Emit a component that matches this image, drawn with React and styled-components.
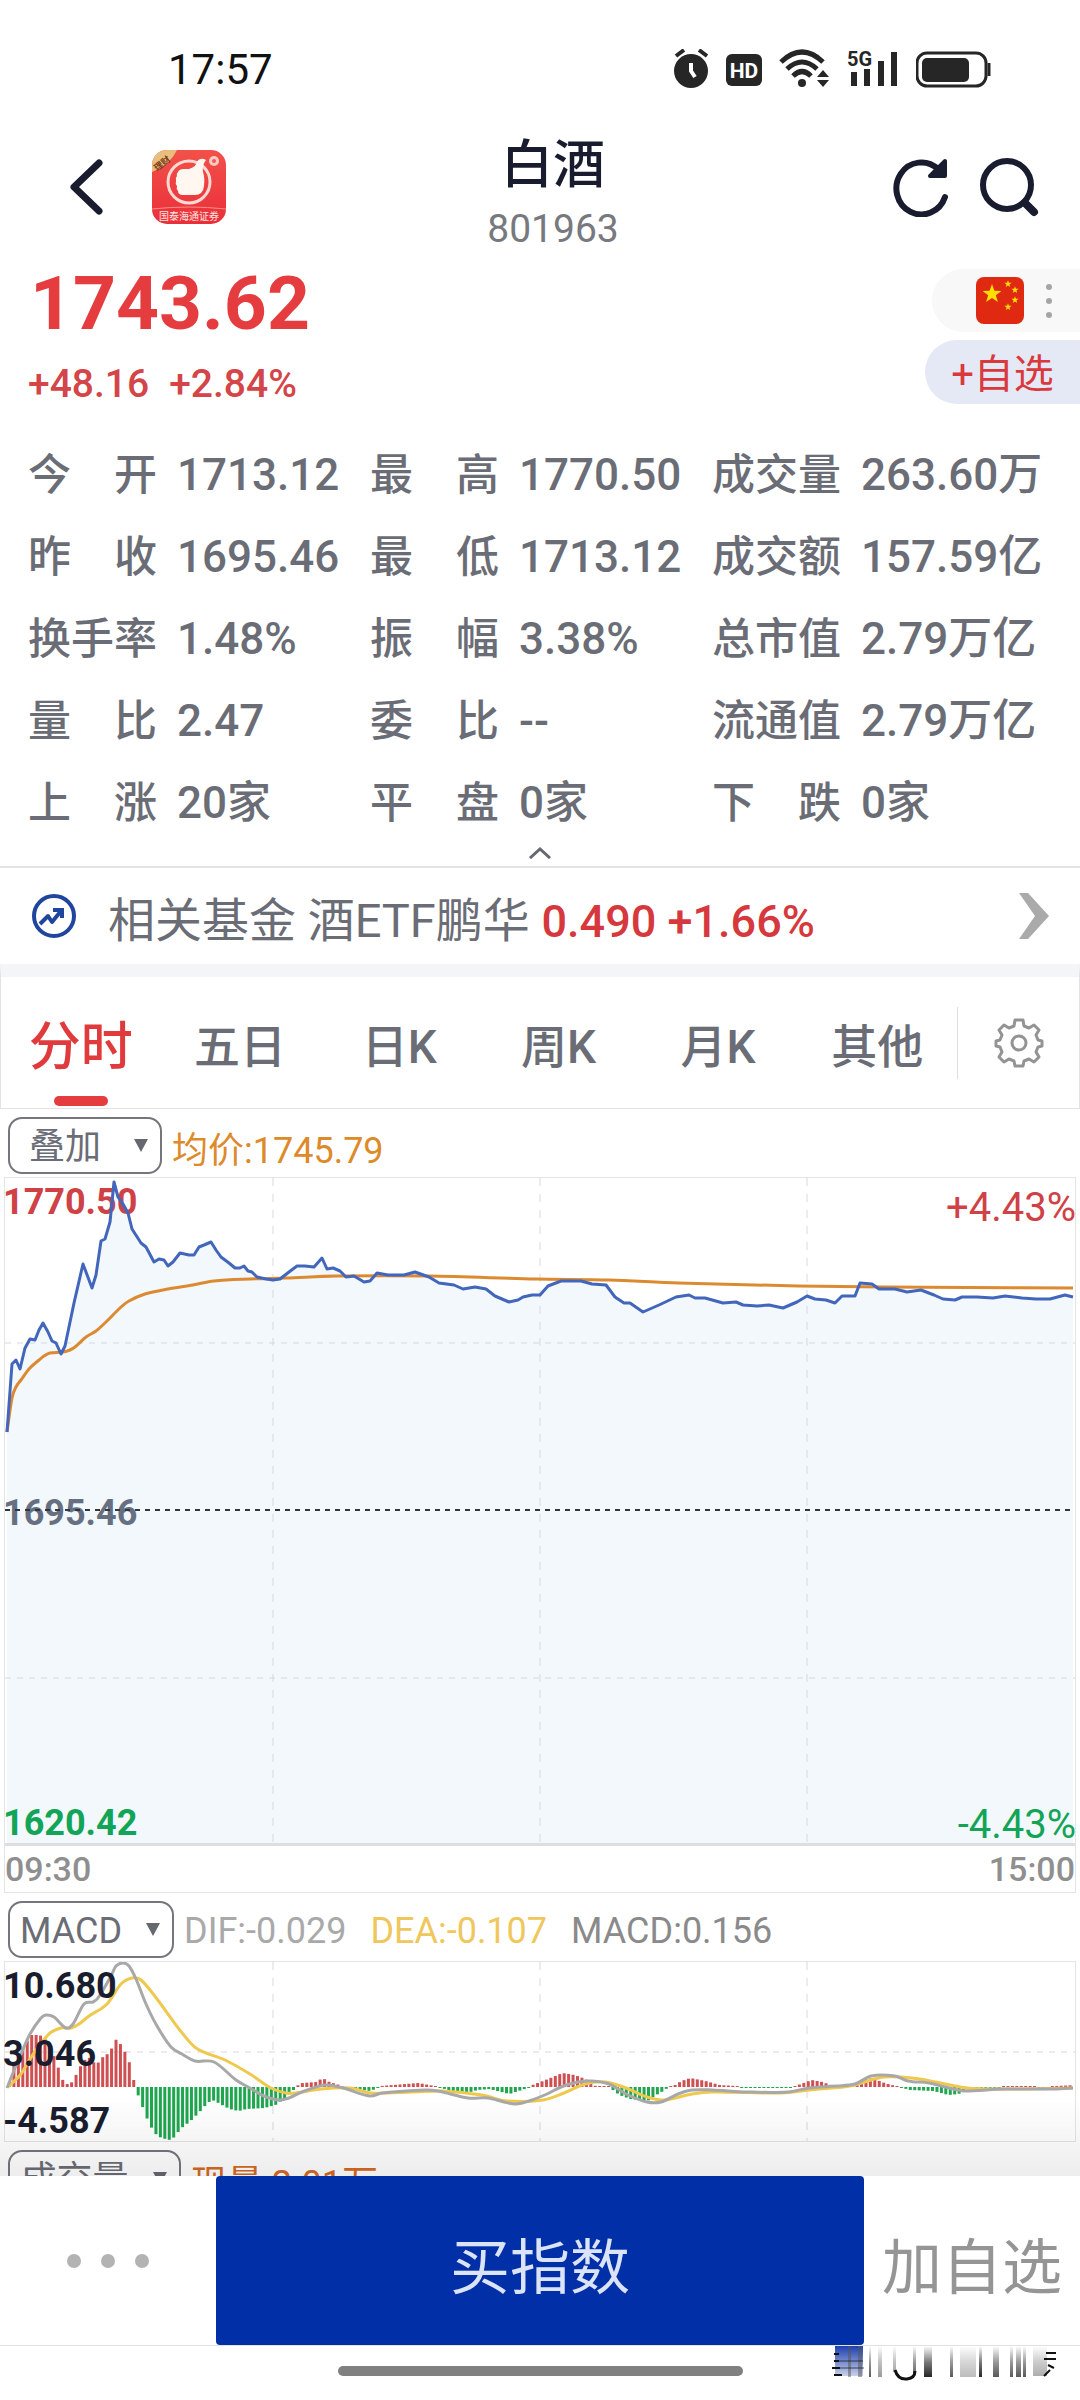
/* IMPORT */
import React, { useState } from "react";
import styled, { createGlobalStyle } from "styled-components";

/* DATA */
const QUOTE_ROWS = [
  ["今　开", "1713.12"], ["最　高", "1770.50"], ["成交量", "263.60万"],
  ["昨　收", "1695.46"], ["最　低", "1713.12"], ["成交额", "157.59亿"],
  ["换手率", "1.48%"], ["振　幅", "3.38%"], ["总市值", "2.79万亿"],
  ["量　比", "2.47"], ["委　比", "--"], ["流通值", "2.79万亿"],
  ["上　涨", "20家"], ["平　盘", "0家"], ["下　跌", "0家"],
];

const TABS = ["分时", "五日", "日K", "周K", "月K", "其他"];

// 分时价格
const PRICE = [
  [2, 254], [7, 186], [11, 182], [15, 191], [20, 170], [25, 161], [30, 162], [34, 152], [38, 145], [43, 154],
  [47, 163], [51, 165], [56, 176], [60, 168], [69, 125], [78, 86], [87, 110], [91, 97], [96, 63], [100, 61],
  [105, 44], [109, 4], [113, 19], [118, 26], [123, 35], [127, 51], [136, 65], [141, 69], [149, 84], [154, 81],
  [159, 82], [163, 88], [168, 84], [175, 75], [184, 77], [189, 77], [194, 69], [199, 67], [206, 64], [211, 72],
  [216, 79], [224, 85], [230, 90], [235, 90], [239, 88], [243, 93], [247, 94], [252, 99], [261, 101], [268, 102],
  [275, 101], [284, 94], [292, 88], [300, 88], [309, 89], [317, 80], [322, 91], [328, 90], [335, 93], [341, 99],
  [349, 98], [354, 101], [359, 104], [365, 103], [372, 95], [383, 97], [399, 97], [410, 94], [424, 99], [434, 105],
  [449, 107], [458, 111], [470, 109], [481, 111], [490, 118], [504, 124], [513, 122], [518, 119], [527, 117],
  [535, 117], [543, 108], [556, 103], [576, 103], [587, 106], [601, 107], [610, 119], [619, 125], [625, 125],
  [638, 134], [654, 127], [671, 119], [684, 117], [690, 120], [700, 120], [718, 125], [731, 124], [738, 127],
  [752, 128], [764, 127], [778, 130], [792, 124], [802, 118], [810, 121], [821, 122], [830, 125], [837, 118],
  [850, 118], [855, 105], [867, 106], [874, 111], [890, 111], [902, 114], [916, 112], [929, 117], [938, 121],
  [950, 122], [957, 119], [972, 119], [988, 120], [1000, 118], [1017, 120], [1031, 121], [1045, 121], [1060, 117],
  [1068, 119],
];

// 均价
const AVERAGE = [
  [2, 254], [7, 220], [11, 209], [16, 202], [24, 191], [34, 182], [39, 178], [45, 175], [58, 174], [65, 172],
  [70, 169], [81, 159], [91, 153], [102, 143], [115, 130], [124, 123], [140, 116], [163, 111], [188, 107],
  [209, 103], [245, 101], [281, 100], [331, 98], [424, 98], [531, 101], [604, 102], [673, 105], [793, 108],
  [879, 109], [1068, 110],
];

const DIF = [
  [2, 126], [8, 111], [16, 92], [25, 72], [36, 56], [41, 53], [49, 55], [61, 66], [68, 62], [79, 42], [88, 40],
  [93, 36], [106, 14], [111, 4], [118, 1], [124, 4], [131, 17], [141, 42], [152, 64], [166, 85], [177, 92],
  [190, 99], [209, 100], [231, 118], [245, 126], [259, 134], [274, 138], [284, 136], [297, 130], [320, 123],
  [338, 126], [365, 134], [377, 131], [420, 128], [433, 129], [463, 136], [483, 136], [499, 140], [511, 142],
  [524, 139], [542, 132], [556, 125], [573, 120], [587, 119], [604, 122], [621, 132], [642, 140], [656, 140],
  [673, 132], [687, 128], [707, 128], [742, 130], [783, 130], [804, 126], [831, 124], [850, 122], [866, 114],
  [890, 114], [903, 119], [924, 121], [948, 127], [959, 129], [1000, 127], [1045, 127], [1068, 126],
];

const DEA = [
  [3, 125], [16, 112], [25, 97], [34, 84], [45, 71], [56, 66], [66, 66], [74, 62], [84, 54], [102, 42],
  [116, 22], [127, 16], [136, 18], [152, 37], [174, 67], [191, 86], [220, 98], [245, 112], [266, 126], [281, 131],
  [291, 131], [316, 127], [345, 126], [366, 131], [406, 130], [438, 129], [477, 133], [502, 139], [538, 138],
  [559, 131], [580, 122], [600, 120], [621, 126], [642, 135], [659, 138], [687, 132], [707, 130], [776, 131],
  [804, 128], [845, 124], [866, 118], [879, 115], [907, 116], [931, 120], [962, 126], [1000, 127], [1068, 126],
];

// MACD 柱：[x, 高度]，正红负绿
const HISTOGRAM = [
  [3, 1], [8, 23], [16, 36], [25, 52], [34, 52], [43, 47], [49, 29], [52, 22], [56, 9], [60, 3], [65, 3],
  [69, 9], [74, 19], [78, 26], [83, 30], [91, 22], [96, 29], [105, 35], [109, 48], [113, 46], [118, 38],
  [123, 28], [127, 12], [131, -4], [136, -17], [140, -28], [144, -37], [149, -46], [154, -50], [163, -53],
  [167, -52], [171, -47], [176, -41], [185, -34], [194, -25], [202, -16], [207, -13], [213, -16], [224, -22],
  [233, -24], [241, -22], [259, -21], [270, -18], [277, -13], [284, -7], [288, -3], [291, 1], [297, 4],
  [311, 5], [317, 9], [324, 5], [334, 2], [341, -1], [365, -4], [372, -1], [375, 1], [413, 4], [429, 1],
  [436, -1], [449, -5], [461, -6], [472, -3], [484, -2], [504, -7], [513, -4], [522, -1], [527, 2], [540, 7],
  [557, 14], [569, 12], [580, 8], [587, 3], [590, 1], [602, 1], [606, -2], [614, -8], [625, -12], [642, -14],
  [649, -9], [656, -5], [662, -1], [668, 1], [676, 6], [685, 9], [700, 6], [714, 2], [731, 1], [735, -1],
  [786, -1], [790, 1], [798, 4], [806, 7], [817, 5], [828, 1], [850, 1], [857, 7], [867, 9], [876, 5], [886, 2],
  [891, 1], [897, -1], [905, -3], [928, -4], [943, -8], [953, -7], [965, -1], [993, -1], [996, 1], [1027, 1],
  [1040, -1], [1050, 1], [1070, 2],
];

const CHART_WIDTH = 1070;
const PRICE_HEIGHT = 665;
const MACD_HEIGHT = 179;
const MACD_ZERO = 125;
const MINUTES = 240;
const GRID_X = [268, 535, 802];

/* HELPERS */
const linePath = (points) => "M" + points.map((p) => p.join(",")).join("L");

const smoothPath = (points) => {
  let d = `M${points[0].join(",")}`;
  for (let i = 0; i < points.length - 1; i++) {
    const p0 = points[i - 1] || points[i];
    const p1 = points[i];
    const p2 = points[i + 1];
    const p3 = points[i + 2] || p2;
    const step = (p2[0] - p1[0]) / 3;
    const slopeA = (p2[1] - p0[1]) / (p2[0] - p0[0]);
    const slopeB = (p3[1] - p1[1]) / (p3[0] - p1[0]);
    d += `C${p1[0] + step},${p1[1] + slopeA * step} ${p2[0] - step},${p2[1] - slopeB * step} ${p2.join(",")}`;
  }
  return d;
};

const valueAt = (points, x) => {
  const next = points.findIndex((p) => p[0] >= x);
  if (next <= 0) return points[next === 0 ? 0 : points.length - 1][1];
  const [x0, y0] = points[next - 1];
  const [x1, y1] = points[next];
  return y0 + ((y1 - y0) * (x - x0)) / (x1 - x0);
};

const bars = Array.from({ length: MINUTES }, (_, i) => {
  const x = 3 + (i * 1065) / MINUTES;
  const value = valueAt(HISTOGRAM, x + 1);
  const height = Math.max(1, Math.abs(value));
  return { x, height, up: value > 0, y: value > 0 ? MACD_ZERO - height : MACD_ZERO };
});

/* ICONS */
const AlarmIcon = () => (
  <svg width="35" height="40" viewBox="0 0 35 40" aria-hidden="true">
    <circle cx="17" cy="22" r="17" fill="#262626" />
    <path d="M2 7 10 1M33 7 25 1" stroke="#262626" strokeWidth="4" />
    <path d="M17 14v8l4 6" fill="none" stroke="#fff" strokeWidth="4" />
  </svg>
);

const HdIcon = () => (
  <svg width="36" height="40" viewBox="0 0 36 40" aria-hidden="true">
    <rect y="5" width="36" height="32" rx="6" fill="#262626" />
    <text x="18" y="29" fill="#fff" fontSize="21" fontWeight="700" fontFamily="Roboto, sans-serif" textAnchor="middle">HD</text>
  </svg>
);

const WifiIcon = () => (
  <svg width="50" height="40" viewBox="0 0 50 40" aria-hidden="true">
    <g fill="none" stroke="#262626" strokeWidth="5">
      <path d="M2 13Q23-7 44 13" />
      <path d="M8 20Q23 6 38 20" />
      <path d="M14 27Q23 18 32 27" />
    </g>
    <circle cx="23" cy="34" r="4" fill="#262626" />
    <path d="M38 28l6-7 6 7zM38 31h12l-6 7z" fill="#262626" />
  </svg>
);

const SignalIcon = () => (
  <svg width="53" height="48" viewBox="0 -4 53 48" aria-hidden="true">
    <text x="1" y="17" fill="#262626" fontSize="20" fontWeight="700" fontFamily="Roboto, sans-serif">5G</text>
    <path d="M5 23h6v14H5zM18 20h6v17h-6zM32 12h6v25h-6zM45 3h6v34h-6z" fill="#262626" />
  </svg>
);

const BatteryIcon = () => (
  <svg width="76" height="40" viewBox="0 0 76 40" aria-hidden="true">
    <rect x="1" y="4" width="69" height="33" rx="10" fill="none" stroke="#262626" strokeWidth="3" />
    <rect x="6" y="9" width="47" height="24" rx="5" fill="#262626" />
    <path d="M73 14v13" stroke="#262626" strokeWidth="3" />
  </svg>
);

const BackIcon = () => (
  <svg width="44" height="60" viewBox="0 0 44 60" aria-hidden="true">
    <path d="M33 6 8 30l25 24" fill="none" stroke="#191c2f" strokeWidth="7" strokeLinecap="round" strokeLinejoin="round" />
  </svg>
);

const BrokerLogo = () => (
  <svg width="74" height="74" viewBox="0 0 74 74" aria-hidden="true">
    <defs>
      <linearGradient id="brokerRed" x1="0" y1="0" x2="0" y2="1">
        <stop offset="0" stopColor="#f2514a" />
        <stop offset="1" stopColor="#ea2f39" />
      </linearGradient>
      <clipPath id="brokerClip"><rect width="74" height="74" rx="15" /></clipPath>
    </defs>
    <g clipPath="url(#brokerClip)">
      <rect width="74" height="74" fill="url(#brokerRed)" />
      <path d="M0 0h25Q18 15 0 22z" fill="#e9bd7c" />
      <text x="1" y="18" fill="#7a3d1c" fontSize="9" fontWeight="700" transform="rotate(-38 8 14)">理财</text>
      <circle cx="37" cy="32" r="21" fill="none" stroke="#ffd9d2" strokeWidth="3" />
      <path d="M26 22q1-3 6-3h5q7-2 8-7 2-4 7-3l2 1q-4 5-3 12 2 6 1 14-1 9-9 9H31q-5 0-5-4-2-2-1-5-2-2-1-5-1-3 1-5-1-2 1-4z" fill="#fff7f0" />
      <circle cx="62" cy="11" r="5" fill="#ffc9c2" />
      <circle cx="62" cy="11" r="2" fill="#ee5a54" />
      <path d="M0 59q37-4 74 0" fill="none" stroke="#ff8c86" strokeWidth="1" />
      <text x="37" y="70" fill="#ffe5e1" fontSize="10" textAnchor="middle">国泰海通证券</text>
    </g>
  </svg>
);

const RefreshIcon = () => (
  <svg width="58" height="60" viewBox="0 0 58 60" aria-hidden="true">
    <path d="M53 40A25 26 0 1 1 46 12" fill="none" stroke="#191c2f" strokeWidth="6" strokeLinecap="round" />
    <path d="M53 4v15H38z" fill="#191c2f" stroke="#191c2f" strokeWidth="4" strokeLinejoin="round" />
  </svg>
);

const SearchIcon = () => (
  <svg width="60" height="60" viewBox="0 0 60 60" aria-hidden="true">
    <circle cx="27" cy="28" r="24" fill="none" stroke="#191c2f" strokeWidth="6" />
    <path d="M45 46 54 55" stroke="#191c2f" strokeWidth="8" strokeLinecap="round" />
  </svg>
);

const STAR = "0,-10 2.4,-3.2 9.5,-3.1 3.8,1.2 5.9,8.1 0,4 -5.9,8.1 -3.8,1.2 -9.5,-3.1 -2.4,-3.2";

const FlagIcon = () => (
  <svg width="48" height="47" viewBox="0 0 48 47" aria-hidden="true">
    <rect width="48" height="47" rx="8" fill="#df2910" />
    <g fill="#ffde00">
      <polygon points={STAR} transform="translate(16 17)" />
      <polygon points={STAR} transform="translate(32 7) scale(.38)" />
      <polygon points={STAR} transform="translate(39 13) scale(.38)" />
      <polygon points={STAR} transform="translate(39 23) scale(.38)" />
      <polygon points={STAR} transform="translate(32 30) scale(.38)" />
    </g>
  </svg>
);

const MoreIcon = () => (
  <svg width="6" height="36" viewBox="0 0 6 36" aria-hidden="true">
    <g fill="#a5a5a5"><circle cx="3" cy="4" r="3" /><circle cx="3" cy="18" r="3" /><circle cx="3" cy="32" r="3" /></g>
  </svg>
);

const TrendIcon = () => (
  <svg width="46" height="46" viewBox="0 0 46 46" aria-hidden="true">
    <circle cx="23" cy="23" r="20" fill="none" stroke="#1f459c" strokeWidth="4" />
    <path d="M9 31l8-8 4 6 9-11" fill="none" stroke="#1f459c" strokeWidth="4" strokeLinejoin="round" />
    <path d="M22 17h9v8" fill="none" stroke="#1f459c" strokeWidth="4" />
  </svg>
);

const GearIcon = () => (
  <svg width="50" height="50" viewBox="0 0 50 50" aria-hidden="true">
    <g fill="none" stroke="#939393" strokeWidth="3" strokeLinejoin="round">
      <path d="M21 2h8l1 6 5 2 5-3 5 5-3 5 2 5 4 1v5l-4 1-2 5 3 5-5 5-5-3-5 2-1 5h-8l-1-5-5-2-5 3-5-5 3-5-2-5-4-1v-5l4-1 2-5-3-5 5-5 5 3 5-2z" />
      <circle cx="25" cy="25" r="7" />
    </g>
  </svg>
);

/* COMPONENTS */
const Picker = ({ name, value, width }) => (
  <StPicker>
    <StSelect aria-label={name} defaultValue={value} $width={width}>
      <option>{value}</option>
    </StSelect>
    <StCaret width="14" height="13" viewBox="0 0 14 13" aria-hidden="true">
      <path d="M0 0h14L7 13z" fill="#66686f" />
    </StCaret>
  </StPicker>
);

const GridLines = ({ height, rows }) => (
  <g stroke="#d5d9df" strokeWidth="1" strokeDasharray="8 8">
    {GRID_X.map((x) => <path key={x} d={`M${x} 0V${height}`} />)}
    {rows.map((y) => <path key={y} d={`M0 ${y}H${CHART_WIDTH}`} strokeDasharray="6 6" />)}
  </g>
);

// 分时图
const PriceChart = () => (
  <StFrame>
    <StPlot $height={PRICE_HEIGHT}>
      <StScale>
        <StTick $color="#cf4146">1770.50</StTick>
        <StTick $color="#6b6f7e">1695.46</StTick>
        <StTick $color="#12a650">1620.42</StTick>
      </StScale>
      <StScale $right>
        <StPercent $color="#cf4146">+4.43%</StPercent>
        <StPercent $color="#12a650">-4.43%</StPercent>
      </StScale>
      <StSvg viewBox={`0 0 ${CHART_WIDTH} ${PRICE_HEIGHT}`} preserveAspectRatio="none" role="img" aria-label="分时走势">
        <path d={`${linePath(PRICE)}V${PRICE_HEIGHT}H2Z`} fill="rgba(40, 130, 200, 0.06)" />
        <GridLines height={PRICE_HEIGHT} rows={[165, 500]} />
        <path d={`M0 332H${CHART_WIDTH}`} stroke="#33363d" strokeWidth="2" strokeDasharray="5 5" />
        <path d={smoothPath(AVERAGE)} fill="none" stroke="#dc8a32" strokeWidth="3" />
        <path d={linePath(PRICE)} fill="none" stroke="#4166bb" strokeWidth="3" strokeLinejoin="round" />
      </StSvg>
    </StPlot>
    <StTimeAxis>
      <span>09:30</span>
      <span>15:00</span>
    </StTimeAxis>
  </StFrame>
);

// MACD 指标图，刻度文字在柱子上面
const MacdChart = () => (
  <StFrame>
    <StPlot $height={MACD_HEIGHT}>
      <StSvg viewBox={`0 0 ${CHART_WIDTH} ${MACD_HEIGHT}`} preserveAspectRatio="none" role="img" aria-label="MACD">
        <GridLines height={MACD_HEIGHT} rows={[90]} />
        {bars.map((bar) => (
          <rect key={bar.x} x={bar.x} y={bar.y} width="3" height={bar.height} fill={bar.up ? "#cf5052" : "#1fa64f"} />
        ))}
        <path d={smoothPath(DEA)} fill="none" stroke="#efc84e" strokeWidth="3" />
        <path d={smoothPath(DIF)} fill="none" stroke="#a8a8a8" strokeWidth="3" />
      </StSvg>
      <StScale>
        <StTick $color="#1a1d2e">10.680</StTick>
        <StTick $color="#1a1d2e">3.046</StTick>
        <StTick $color="#1a1d2e">-4.587</StTick>
      </StScale>
    </StPlot>
  </StFrame>
);

// 右下角水印
const Watermark = () => (
  <StWatermark width="224" height="36" viewBox="0 0 224 36" aria-hidden="true">
    <defs>
      <linearGradient id="smear" x1="0" y1="0" x2="0" y2="1">
        <stop offset="0" stopColor="#fff" stopOpacity="1" />
        <stop offset="0.5" stopColor="#fff" stopOpacity="0.4" />
        <stop offset="1" stopColor="#fff" stopOpacity="0" />
      </linearGradient>
      <linearGradient id="smearBlue" x1="0" y1="0" x2="0" y2="1">
        <stop offset="0" stopColor="#1d3fae" />
        <stop offset="1" stopColor="#c9d1ea" />
      </linearGradient>
    </defs>
    <rect x="3" width="28" height="30" fill="url(#smearBlue)" />
    <g fill="#555">
      <rect x="16" width="3" height="31" opacity=".5" /><rect x="26" width="4" height="31" opacity=".5" />
      <rect x="37" width="2" height="31" /><rect x="46" width="4" height="31" opacity=".6" />
      <rect x="61" width="3" height="26" opacity=".6" /><rect x="81" width="3" height="28" />
      <rect x="92" width="8" height="31" fill="#222" /><rect x="118" width="3" height="31" />
      <rect x="128" width="16" height="31" opacity=".4" /><rect x="147" width="3" height="31" fill="#222" />
      <rect x="161" width="6" height="31" /><rect x="178" width="3" height="31" /><rect x="184" width="5" height="31" />
      <rect x="191" width="3" height="31" /><rect x="201" width="14" height="30" opacity=".5" />
    </g>
    <rect x="32" width="190" height="32" fill="url(#smear)" />
    <g fill="none" stroke="#111" strokeWidth="2">
      <path d="M2 8h5M2 15h5M0 22h8M2 29h8" />
      <path d="M7 15h24M8 22h24" opacity=".35" />
      <path d="M63 24q3 10 12 9 8-1 8-8" strokeWidth="3" />
      <path d="M214 7h10M212 13h12M216 19l6 3M218 24l-6 6" />
    </g>
  </StWatermark>
);

const App = () => {
  const [tab, setTab] = useState("分时");

  return (
    <StPage>
      <GlobalStyle />
      <StMain>
        <StStatusBar>
          <StClock>17:57</StClock>
          <StStatusIcons>
            <AlarmIcon />
            <HdIcon />
            <WifiIcon />
            <SignalIcon />
            <BatteryIcon />
          </StStatusIcons>
        </StStatusBar>

        <StHeader>
          <StHeaderSide>
            <StIconBtn aria-label="返回"><BackIcon /></StIconBtn>
            <StLogoBtn aria-label="国泰海通证券"><BrokerLogo /></StLogoBtn>
          </StHeaderSide>
          <StTitleBox>
            <StTitle>白酒</StTitle>
            <StCode>801963</StCode>
          </StTitleBox>
          <StHeaderSide $right>
            <StIconBtn aria-label="刷新"><RefreshIcon /></StIconBtn>
            <StIconBtn aria-label="搜索"><SearchIcon /></StIconBtn>
          </StHeaderSide>
        </StHeader>

        <StSummary>
          <div>
            <StPrice>1743.62</StPrice>
            <StChange>
              <span>+48.16</span>
              <span>+2.84%</span>
            </StChange>
          </div>
          <StPills>
            <StMarketBtn aria-label="市场"><FlagIcon /><MoreIcon /></StMarketBtn>
            <StFavBtn>+自选</StFavBtn>
          </StPills>
        </StSummary>

        <StQuoteGrid>
          {QUOTE_ROWS.map(([label, value]) => (
            <StQuoteItem key={label}>
              <dt>{label}</dt>
              <dd>{value}</dd>
            </StQuoteItem>
          ))}
        </StQuoteGrid>
        <StCollapseBtn aria-label="收起">
          <svg width="22" height="12" viewBox="0 0 22 12" aria-hidden="true">
            <path d="M1 11 11 2l10 9" fill="none" stroke="#66686f" strokeWidth="3" />
          </svg>
        </StCollapseBtn>

        <StFundLink href="#fund">
          <TrendIcon />
          <StFundText>
            相关基金 酒ETF鹏华 <StFundValue>0.490 +1.66%</StFundValue>
          </StFundText>
          <svg width="30" height="48" viewBox="0 0 30 48" aria-hidden="true">
            <path d="M0 1h9l21 23L9 47H0l16-23z" fill="#aaa" />
          </svg>
        </StFundLink>

        <StTabBar>
          <StTabs role="tablist">
            {TABS.map((name) => (
              <StTab key={name} role="tab" aria-selected={name === tab} $active={name === tab} onClick={() => setTab(name)}>
                {name}
              </StTab>
            ))}
          </StTabs>
          <StGearBtn aria-label="设置"><GearIcon /></StGearBtn>
        </StTabBar>

        <StToolRow>
          <Picker name="叠加" value="叠加" width={154} />
          <StLegend $color="#dd8a2b">均价:1745.79</StLegend>
        </StToolRow>
        <PriceChart />

        <StToolRow>
          <Picker name="指标" value="MACD" width={166} />
          <StLegend $color="#a9a9a9">DIF:-0.029</StLegend>
          <StLegend $color="#efc75c">DEA:-0.107</StLegend>
          <StLegend $color="#8a8a8a">MACD:0.156</StLegend>
        </StToolRow>
        <MacdChart />

        <StToolRow>
          <Picker name="副图" value="成交量" width={173} />
          <StLegend $color="#d56a24">现量:2.01万</StLegend>
        </StToolRow>
      </StMain>

      <StFooter>
        <StActions>
          <StMoreBtn aria-label="更多"><i /><i /><i /></StMoreBtn>
          <StBuyBtn>买指数</StBuyBtn>
          <StAddBtn>加自选</StAddBtn>
        </StActions>
        <StHomeArea>
          <StHomeBar />
          <Watermark />
        </StHomeArea>
      </StFooter>
    </StPage>
  );
};

/* STYLED-COMPONENTS */
const GlobalStyle = createGlobalStyle`
  * {
    box-sizing: border-box;
  }
  body {
    margin: 0;
    background: #fff;
    color: #6b6d76;
    font-family: Roboto, "Noto Sans CJK SC", sans-serif;
  }
  button, select {
    margin: 0;
    padding: 0;
    border: none;
    background: none;
    color: inherit;
    font: inherit;
    cursor: pointer;
  }
  svg {
    display: block;
    flex-shrink: 0;
  }
`;

const StPage = styled.div`
  display: flex;
  flex-direction: column;
  height: 100vh;
`;

const StMain = styled.main`
  flex: 1;
  min-height: 0;
  overflow-x: hidden;
  overflow-y: auto;
  scrollbar-width: none;
`;

const StStatusBar = styled.div`
  display: flex;
  justify-content: space-between;
  align-items: center;
  height: 130px;
  padding: 8px 88px 0 168px;
`;

const StClock = styled.span`
  color: #111;
  font-size: 42px;
`;

const StStatusIcons = styled.div`
  display: flex;
  align-items: center;
  gap: 17px;
`;

const StHeader = styled.header`
  display: grid;
  grid-template-columns: 1fr auto 1fr;
  align-items: center;
  padding: 0 40px 0 66px;
`;

const StHeaderSide = styled.div`
  display: flex;
  justify-content: ${({ $right }) => ($right ? "flex-end" : "flex-start")};
  align-items: center;
  gap: ${({ $right }) => ($right ? "30px" : "42px")};
  padding-bottom: 8px;
`;

const StIconBtn = styled.button`
  display: flex;
`;

const StLogoBtn = styled(StIconBtn)`
  border-radius: 15px;
`;

const StTitleBox = styled.div`
  display: flex;
  flex-direction: column;
  align-items: center;
  gap: 8px;
  padding-top: 4px;
`;

const StTitle = styled.h1`
  margin: 0;
  color: #191c2f;
  font-size: 52px;
  font-weight: 500;
  line-height: 64px;
`;

const StCode = styled.span`
  color: #77797f;
  font-size: 39px;
  line-height: 46px;
`;

const StSummary = styled.section`
  display: flex;
  justify-content: space-between;
  padding: 13px 0 23px 28px;
`;

const StPrice = styled.div`
  padding-left: 2px;
  color: #e53d3f;
  font-size: 75px;
  font-weight: 700;
  line-height: 76px;
`;

const StChange = styled.div`
  display: flex;
  gap: 20px;
  margin-top: 18px;
  color: #d34548;
  font-size: 39px;
  font-weight: 500;
  line-height: 50px;
`;

const StPills = styled.div`
  display: flex;
  flex-direction: column;
  align-items: flex-end;
  gap: 8px;
  padding-top: 4px;
`;

const StMarketBtn = styled.button`
  display: flex;
  justify-content: flex-end;
  align-items: center;
  gap: 22px;
  width: 148px;
  height: 63px;
  padding-right: 28px;
  background: #f8f8f8;
  border-radius: 32px 0 0 32px;
`;

const StFavBtn = styled.button`
  width: 155px;
  height: 64px;
  padding-top: 6px;
  background: #e4e9f5;
  border-radius: 32px 0 0 32px;
  color: #d9383c;
  font-size: 40px;
  line-height: 58px;
`;

const StQuoteGrid = styled.dl`
  display: grid;
  grid-template-columns: repeat(3, 1fr);
  margin: 0;
  padding: 2px 26px 0 28px;
`;

const StQuoteItem = styled.div`
  display: flex;
  gap: 20px;
  height: 82px;
  font-size: 43px;
  font-weight: 500;
  line-height: 82px;
  white-space: nowrap;

  dd {
    margin: 0;
    font-size: 44px;
  }
`;

const StCollapseBtn = styled.button`
  display: flex;
  justify-content: center;
  width: 100%;
  height: 24px;
  padding-top: 3px;
  border-bottom: 2px solid #e3e4e6;
`;

const StFundLink = styled.a`
  display: flex;
  align-items: center;
  height: 96px;
  padding: 0 31px;
  color: #6b6d76;
  text-decoration: none;
`;

const StFundText = styled.span`
  flex: 1;
  padding-left: 31px;
  font-size: 47px;
  white-space: nowrap;
`;

const StFundValue = styled.b`
  color: #d6393d;
  font-size: 45px;
  font-weight: 500;
`;

const StTabBar = styled.div`
  display: flex;
  align-items: center;
  height: 145px;
  border: 1px solid #e2e2e4;
  border-top: 13px solid #f3f5f8;
`;

const StTabs = styled.div`
  display: grid;
  grid-template-columns: repeat(6, 1fr);
  flex: 1;
  align-self: stretch;
`;

const StTab = styled.button`
  position: relative;
  color: ${({ $active }) => ($active ? "#e03a3d" : "inherit")};
  font-size: ${({ $active }) => ($active ? "52px" : "46px")};
  font-weight: 500;

  &::after {
    content: "";
    display: ${({ $active }) => ($active ? "block" : "none")};
    position: absolute;
    bottom: 2px;
    left: 50%;
    width: 54px;
    height: 10px;
    margin-left: -27px;
    background: #e53d3f;
    border-radius: 5px;
  }
`;

const StGearBtn = styled.button`
  display: flex;
  justify-content: center;
  align-items: center;
  width: 122px;
  height: 72px;
  border-left: 1px solid #dcdde0;
`;

const StToolRow = styled.div`
  display: flex;
  align-items: center;
  gap: 24px;
  height: 68px;
  padding: 4px 0 0 8px;
`;

const StPicker = styled.div`
  display: flex;
  position: relative;
  margin-right: -14px;
`;

const StSelect = styled.select`
  appearance: none;
  width: ${({ $width }) => $width}px;
  height: 57px;
  padding: 4px 40px 0 0;
  border: 2px solid #74767c;
  border-radius: 14px;
  font-size: 36px;
  text-align: center;
`;

const StCaret = styled.svg`
  position: absolute;
  top: 22px;
  right: 14px;
  pointer-events: none;
`;

const StLegend = styled.span`
  padding-top: 4px;
  color: ${({ $color }) => $color};
  font-size: 36px;
  white-space: nowrap;
`;

const StFrame = styled.div`
  margin: 0 4px;
  border: 1px solid #e4e4e4;
`;

const StPlot = styled.div`
  position: relative;
  height: ${({ $height }) => $height}px;
`;

const StScale = styled.div`
  display: flex;
  flex-direction: column;
  justify-content: space-between;
  align-items: ${({ $right }) => ($right ? "flex-end" : "flex-start")};
  position: absolute;
  inset: ${({ $right }) => ($right ? "6px -1px -6px" : "2px -2px -2px")};
`;

const StTick = styled.span`
  color: ${({ $color }) => $color};
  font-size: 36px;
  font-weight: 700;
  line-height: 44px;
`;

const StPercent = styled.span`
  color: ${({ $color }) => $color};
  font-size: 40px;
  line-height: 48px;
`;

const StSvg = styled.svg`
  position: relative;
  width: 100%;
  height: 100%;
`;

const StTimeAxis = styled.div`
  display: flex;
  justify-content: space-between;
  border-top: 3px solid #dcdee0;
  color: #8f8f8f;
  font-size: 34px;
  font-weight: 500;
  line-height: 46px;
`;

const StFooter = styled.footer`
  position: relative;
  background: #fff;

  &::before {
    content: "";
    position: absolute;
    bottom: 100%;
    left: 0;
    right: 0;
    height: 80px;
    background: linear-gradient(to bottom, rgba(0, 0, 0, 0), rgba(0, 0, 0, 0.07));
    pointer-events: none;
  }
`;

const StActions = styled.div`
  display: grid;
  grid-template-columns: 1fr 3fr 1fr;
  height: 170px;
  border-bottom: 1px solid #e2e2e2;
`;

const StMoreBtn = styled.button`
  display: flex;
  justify-content: center;
  align-items: center;
  gap: 20px;

  i {
    width: 14px;
    height: 14px;
    background: #b3b3b3;
    border-radius: 50%;
  }
`;

const StBuyBtn = styled.button`
  padding-top: 4px;
  background: #002fa7;
  border-radius: 4px;
  color: #dbe3f6;
  font-size: 60px;
`;

const StAddBtn = styled.button`
  padding-top: 4px;
  color: #959595;
  font-size: 60px;
  white-space: nowrap;
`;

const StHomeArea = styled.div`
  display: flex;
  justify-content: center;
  position: relative;
  height: 54px;
  padding-top: 20px;
`;

const StHomeBar = styled.div`
  width: 405px;
  height: 10px;
  background: #808080;
  border-radius: 5px;
`;

const StWatermark = styled.svg`
  position: absolute;
  top: 0;
  right: 24px;
`;

export default App;
